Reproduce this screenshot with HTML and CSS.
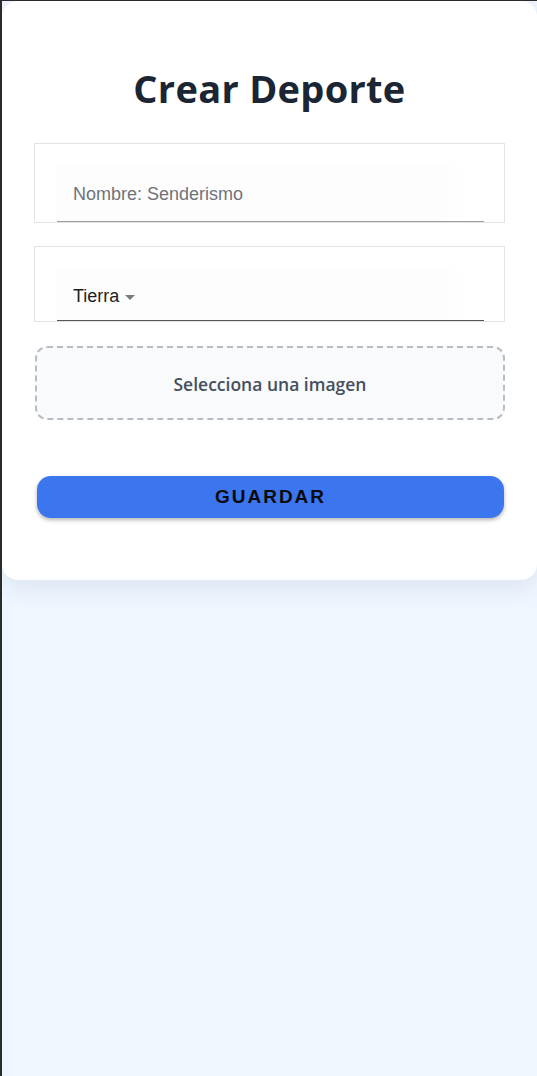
FILE: index.html
```html
<!DOCTYPE html>
<html lang="es">
<head>
<meta charset="utf-8">
<title>Crear Deporte</title>
<link rel="stylesheet" href="styles.css">
</head>
<body>
<div class="frame">
  <main class="card">
    <h1 class="title">Crear Deporte</h1>
    <div class="field field-name">
      <div class="field-inner">
        <span class="placeholder">Nombre: Senderismo</span>
      </div>
    </div>
    <div class="field field-select">
      <div class="field-inner select-inner">
        <span class="select-value">Tierra</span>
        <span class="caret"></span>
      </div>
    </div>
    <div class="dropzone">Selecciona una imagen</div>
    <button class="save-btn" type="button">GUARDAR</button>
  </main>
</div>
</body>
</html>
```

FILE: styles.css
```css
html, body {
  margin: 0;
  padding: 0;
}
body {
  background: #eff6ff;
  font-family: "Liberation Sans", Arial, sans-serif;
}
.frame {
  box-sizing: border-box;
  height: 1076px;
  border-left: 2px solid #2b2b2b;
  border-top: 1px solid #2b2b2b;
  background: #eff6ff;
  overflow: hidden;
}
.card {
  box-sizing: border-box;
  width: 535px;
  height: 579px;
  background: #ffffff;
  border-radius: 16px;
  box-shadow: 0 8px 24px rgba(30, 50, 90, 0.09);
  padding: 63px 32px 0 32px;
  display: flex;
  flex-direction: column;
}
.title {
  margin: 0 0 31px 0;
  text-align: center;
  font-family: "Open Sans", "Noto Sans", sans-serif;
  font-weight: 700;
  font-size: 38px;
  line-height: 48px;
  color: #1b2533;
  letter-spacing: 0.3px;
}
.field {
  box-sizing: border-box;
  border: 1px solid #e3e4e8;
  padding: 21px 20px 0 22px;
}
.field-name {
  height: 80px;
  margin-bottom: 23px;
}
.field-select {
  height: 76px;
  margin-bottom: 24px;
}
.field-inner {
  box-sizing: border-box;
  height: 57px;
  padding-left: 16px;
  display: flex;
  align-items: center;
  background: linear-gradient(90deg, #fdfdfd 0%, #fdfdfd 90%, #ffffff 95%);
  border-bottom: 1px solid #9e9e9e;
  padding-top: 2px;
}
.select-inner {
  height: 53px;
  border-bottom: 1px solid #555555;
  padding-top: 5px;
}
.placeholder {
  font-size: 18px;
  color: #6e737b;
}
.select-value {
  font-size: 18px;
  color: #1f1f1f;
}
.caret {
  width: 0;
  height: 0;
  margin-left: 6px;
  margin-top: 1px;
  border-left: 5px solid transparent;
  border-right: 5px solid transparent;
  border-top: 5px solid #7a7a7a;
}
.dropzone {
  box-sizing: border-box;
  height: 74px;
  margin-left: 1px;
  border: 2px dashed #b8bcc3;
  border-radius: 12px;
  background: #f8fafc;
  display: flex;
  align-items: center;
  justify-content: center;
  font-family: "Open Sans", "Noto Sans", sans-serif;
  font-weight: 600;
  font-size: 17.5px;
  color: #474f5c;
  padding-top: 2px;
}
.save-btn {
  margin: 56px 0 0 3px;
  width: 467px;
  height: 42px;
  border: none;
  border-radius: 14px;
  background: #3b76ef;
  box-shadow: 0 2px 4px rgba(0, 0, 0, 0.3);
  font-family: "Liberation Sans", Arial, sans-serif;
  font-weight: 700;
  font-size: 19px;
  letter-spacing: 2px;
  color: #0a0a0a;
  padding: 0;
  cursor: pointer;
}
```
